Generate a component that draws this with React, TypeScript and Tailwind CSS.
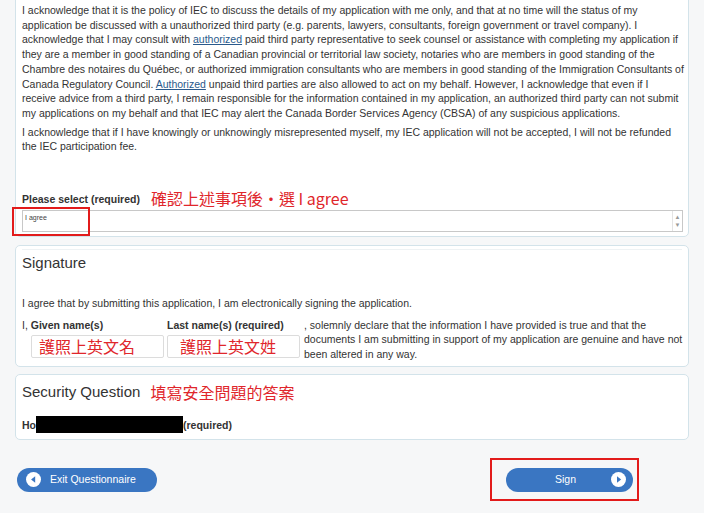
const font = { fontFamily: '"Liberation Sans", Arial, sans-serif' };

const Note = ({ children, className = "" }: { children: React.ReactNode; className?: string }) => (
    <span
        className={`text-[#e0262b] text-[16px] font-normal leading-none ${className}`}
        style={{ fontFamily: '"Noto Sans CJK TC", "Liberation Sans", sans-serif' }}
    >
        {children}
    </span>
)

const CircleArrow = ({ dir }: { dir: "left" | "right" }) => (
    <svg width="15" height="15" viewBox="0 0 16 16">
        <circle cx="8" cy="8" r="8" fill="#fff" />
        {dir === "left" ? (
            <path d="M9.8 4.6 L5.4 8 L9.8 11.4 Z" fill="#3a76c2" />
        ) : (
            <path d="M6.4 4.6 L10.8 8 L6.4 11.4 Z" fill="#3a76c2" />
        )}
    </svg>
)

const App = () => {
    return (
        <div className="w-[704px] h-[513px] overflow-hidden bg-[#f6f7f8] text-[#333] px-[15px]" style={font}>
            {/* declaration panel, scrolled so its top is cut off */}
            <section className="-mt-[12px] bg-white border border-[#d3e3ea] rounded-[5px] pl-[6px] pr-[4px] pt-[14px] pb-[4px] text-[10.5px] leading-[14.7px]">
                <p>
                    I acknowledge that it is the policy of IEC to discuss the details of my application with me only, and that at no time will the status of my application be discussed with a unauthorized third party (e.g. parents, lawyers, consultants, foreign government or travel company). I acknowledge that I may consult with{" "}
                    <a className="text-[#2a5a8c] underline">authorized</a> paid third party representative to seek counsel or assistance with completing my application if they are a member in good standing of a Canadian provincial or territorial law society, notaries who are members in good standing of the Chambre des notaires du Québec, or authorized immigration consultants who are members in good standing of the Immigration Consultants of Canada Regulatory Council.{" "}
                    <a className="text-[#2a5a8c] underline">Authorized</a> unpaid third parties are also allowed to act on my behalf. However, I acknowledge that even if I receive advice from a third party, I remain responsible for the information contained in my application, an authorized third party can not submit my applications on my behalf and that IEC may alert the Canada Border Services Agency (CBSA) of any suspicious applications.
                </p>
                <p className="mt-[4px]">
                    I acknowledge that if I have knowingly or unknowingly misrepresented myself, my IEC application will not be accepted, I will not be refunded the IEC participation fee.
                </p>

                <div className="mt-[38px] flex items-center gap-[11px]">
                    <span className="font-bold">Please select (required)</span>
                    <Note className="-mt-[3px]">確認上述事項後・選 I agree</Note>
                </div>
                <div className="relative mt-[3px] mr-[1px] h-[22px] border border-[#c8c8c8] bg-white flex items-start justify-between">
                    <span className="text-[7px] leading-none pl-[2px] pt-[3px] text-[#444]">I agree</span>
                    <span className="flex flex-col items-center justify-center h-full w-[10px] border-l border-[#e4e4e4] text-[6px] leading-[8px] text-[#999]">
                        <span>▲</span>
                        <span>▼</span>
                    </span>
                    <span className="absolute -left-[11px] -top-[4px] w-[78px] h-[29px] border-[2px] border-[#e21b1b]" />
                </div>
            </section>

            {/* signature */}
            <section className="mt-[8px] bg-white border border-[#d3e3ea] rounded-[5px] pl-[6px] pr-[2px] pt-[3px] pb-[5px] text-[10.5px]">
                <div className="mr-[4px] border-t border-[#eef2f4] pt-[4px]">
                    <h3 className="text-[15px] leading-[18px]">Signature</h3>
                </div>
                <p className="mt-[24px] leading-[14px]">I agree that by submitting this application, I am electronically signing the application.</p>
                <div className="mt-[8px] flex">
                    <div className="w-[145px] shrink-0">
                        <div className="leading-[14px]">I, <b>Given name(s)</b></div>
                        <div className="ml-[9px] mt-[3px] w-[133px] h-[23px] border border-[#dcdcdc] rounded-[2px] pl-[7px] flex items-center">
                            <Note>護照上英文名</Note>
                        </div>
                    </div>
                    <div className="w-[137px] shrink-0">
                        <div className="leading-[14px] font-bold">Last name(s) (required)</div>
                        <div className="mt-[3px] w-[133px] h-[23px] border border-[#dcdcdc] rounded-[2px] pl-[12px] flex items-center">
                            <Note>護照上英文姓</Note>
                        </div>
                    </div>
                    <p className="leading-[14.5px]">
                        , solemnly declare that the information I have provided is true and that the documents I am submitting in support of my application are genuine and have not been altered in any way.
                    </p>
                </div>
            </section>

            {/* security question */}
            <section className="mt-[7px] bg-white border border-[#d3e3ea] rounded-[5px] px-[6px] pt-[8px] pb-[6px] text-[10.5px]">
                <div className="flex items-center gap-[10px]">
                    <h3 className="text-[15px] leading-[18px]">Security Question</h3>
                    <Note>填寫安全問題的答案</Note>
                </div>
                <div className="mt-[15px] flex items-center font-bold leading-[14px]">
                    <span>Ho</span>
                    <span className="w-[147px] h-[17px] bg-black" />
                    <span>(required)</span>
                </div>
            </section>

            {/* buttons */}
            <div className="mt-[27px] flex items-center justify-between">
                <button className="ml-[2px] w-[140px] h-[24px] rounded-full bg-[#3a76c2] text-white text-[10.5px] flex items-center pl-[9px] gap-[9px]">
                    <CircleArrow dir="left" />
                    <span>Exit Questionnaire</span>
                </button>
                <div className="mr-[50px] -my-[9px] w-[149px] h-[43px] border-[2px] border-[#e21b1b] flex items-center pl-[14px]">
                    <button className="w-[127px] h-[24px] rounded-full bg-[#3a76c2] text-white text-[10.5px] flex items-center justify-between pl-[49px] pr-[7px]">
                        <span>Sign</span>
                        <CircleArrow dir="right" />
                    </button>
                </div>
            </div>
        </div>
    )
}

export default App
